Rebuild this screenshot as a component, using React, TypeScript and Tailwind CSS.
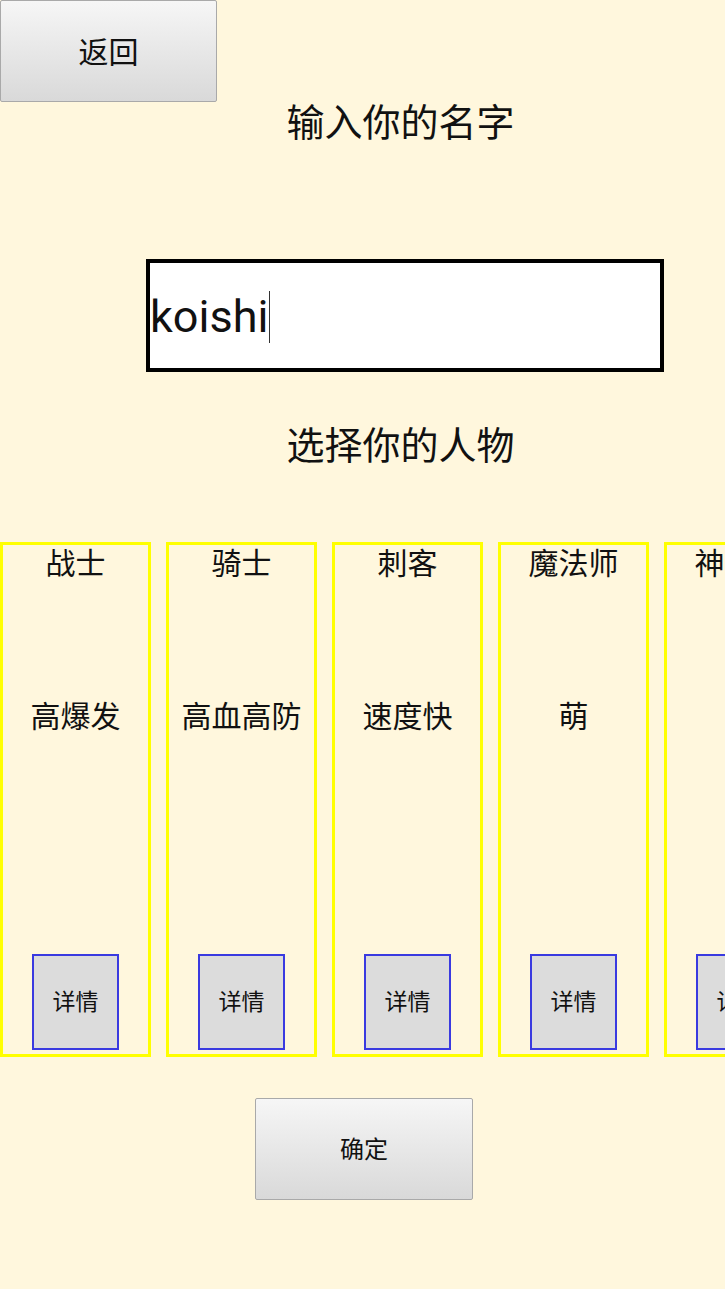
import React from "react";

const roles = [
  { name: "战士", desc: "高爆发" },
  { name: "骑士", desc: "高血高防" },
  { name: "刺客", desc: "速度快" },
  { name: "魔法师", desc: "萌" },
  { name: "神枪手", desc: "" },
];

const font = { fontFamily: '"Noto Sans CJK SC", "Noto Sans", sans-serif' };

export default function App() {
  return (
    <div
      className="w-[725px] h-[1289px] overflow-hidden bg-[#fff7dd] text-[#111] flex flex-col"
      style={font}
    >
      <button className="w-[217px] h-[102px] border border-[#a9a9a9] rounded-[2px] bg-gradient-to-b from-[#f6f6f6] to-[#d9d9d9] text-[30px] leading-none text-[#111] flex items-center justify-center shrink-0">
        <span className="mt-[-3px]">返回</span>
      </button>

      <div className="pl-[76px] text-center text-[38px] leading-[46px] mt-[-5px]">输入你的名字</div>

      <div className="ml-[146px] mt-[116px] w-[518px] h-[113px] border-[4px] border-black bg-white flex items-center shrink-0">
        <span
          className="text-[45px] leading-none ml-[0px] mt-[2px]"
          style={{ fontFamily: 'Roboto, "Liberation Sans", sans-serif' }}
        >
          koishi
        </span>
        <span className="w-[1px] h-[52px] bg-[#333] ml-[1px] mt-[2px]" />
      </div>

      <div className="pl-[76px] text-center text-[38px] leading-[46px] mt-[48px]">选择你的人物</div>

      <div className="flex gap-[15px] mt-[76px] shrink-0">
        {roles.map((r) => (
          <div
            key={r.name}
            className="w-[151px] h-[515px] shrink-0 border-[3px] border-[#ffff00] flex flex-col items-center"
          >
            <div className="text-[30px] leading-[36px] whitespace-nowrap mt-[-2px]">{r.name}</div>
            <div className="text-[30px] leading-[36px] mt-[117px] whitespace-nowrap h-[36px]">{r.desc}</div>
            <button className="mt-auto mb-[4px] w-[87px] h-[96px] border-[2px] border-[#3a3ae0] bg-[#dcdcdc] text-[23px] leading-none text-[#111] flex items-center justify-center">
              <span className="mt-[-3px]">详情</span>
            </button>
          </div>
        ))}
      </div>

      <button className="ml-[255px] mt-[41px] w-[218px] h-[102px] border border-[#a9a9a9] rounded-[2px] bg-gradient-to-b from-[#f6f6f6] to-[#d9d9d9] text-[24px] leading-none text-[#111] flex items-center justify-center shrink-0">
        <span className="mt-[-3px]">确定</span>
      </button>
    </div>
  );
}
